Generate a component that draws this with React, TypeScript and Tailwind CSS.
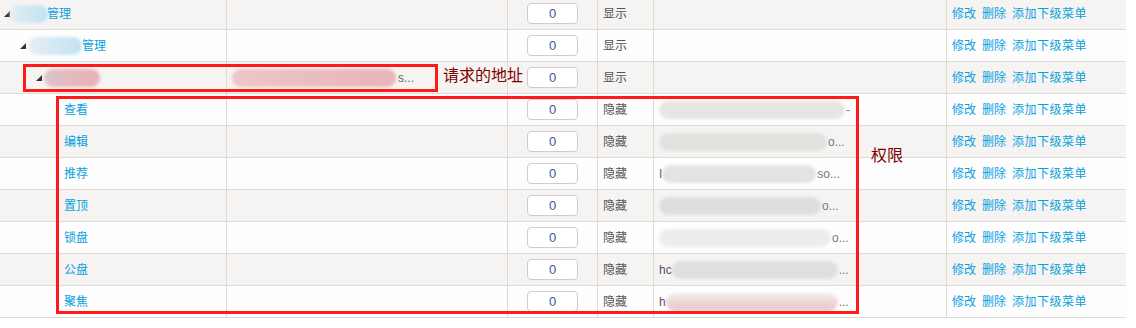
import React from 'react';

const font = { fontFamily: '"Liberation Sans", "Noto Sans CJK SC", sans-serif' };

function Tri() {
  return (
    <svg width="6" height="6" viewBox="0 0 6 6" className="shrink-0">
      <path d="M6 0 L6 6 L0 6 Z" fill="#333" />
    </svg>
  );
}

function Smear({ className }: { className: string }) {
  return <div className={`h-[18px] rounded-full blur-[1.5px] ${className}`} />;
}

function Zero() {
  return (
    <div className="w-[51px] h-[21px] rounded-[4px] border border-[#cfcdca] bg-white flex items-center justify-center text-[13px] text-[#3a5a8a]">
      0
    </div>
  );
}

function Actions() {
  return (
    <div className="flex gap-[6px] text-[12px] text-[#0aa0de] pl-[5px]">
      <span>修改</span>
      <span>删除</span>
      <span className="tracking-[0.5px]">添加下级菜单</span>
    </div>
  );
}

const children = [
  { name: '查看', tail: '-', smear: 'w-[186px] bg-[#e6e5e3]', pre: '' },
  { name: '编辑', tail: 'o...', smear: 'w-[168px] bg-[#e2e1df]', pre: '' },
  { name: '推荐', tail: 'so...', smear: 'w-[154px] bg-[#e4e3e1]', pre: 'I' },
  { name: '置顶', tail: 'o...', smear: 'w-[162px] bg-[#dfdedc]', pre: '' },
  { name: '锁盘', tail: 'o...', smear: 'w-[172px] bg-[#eeedeb]', pre: '' },
  { name: '公盘', tail: '...', smear: 'w-[166px] bg-[#e0dfdd]', pre: 'hc' },
  { name: '聚焦', tail: '...', smear: 'w-[172px] bg-gradient-to-b from-[#efeeec] to-[#e8c4c6]', pre: 'h' },
];

export default function App() {
  return (
    <div className="relative w-[1136px] h-[328px] bg-white overflow-hidden text-[12px]" style={font}>
      <div className="w-[1126px] mt-[-2px]">
        {/* 一级 */}
        <div className="flex h-[32px] border-b border-[#dedbd7] bg-[#f5f4f2]">
          <div className="w-[227px] border-r border-[#dedbd7] flex items-center pl-[4px]">
            <Tri />
            <Smear className="w-[38px] bg-gradient-to-r from-[#e4edf2] to-[#bfe2f3]" />
            <span className="text-[#0aa0de] -ml-[1px]">管理</span>
          </div>
          <div className="w-[281px] border-r border-[#dedbd7]" />
          <div className="w-[90px] border-r border-[#dedbd7] flex items-center justify-center"><Zero /></div>
          <div className="w-[56px] border-r border-[#dedbd7] flex items-center pl-[5px] text-[#555]">显示</div>
          <div className="w-[293px] border-r border-[#dedbd7]" />
          <div className="w-[179px] flex items-center"><Actions /></div>
        </div>
        {/* 二级 */}
        <div className="flex h-[32px] border-b border-[#dedbd7] bg-[#fefefe]">
          <div className="w-[227px] border-r border-[#dedbd7] flex items-center pl-[20px]">
            <Tri />
            <Smear className="w-[54px] ml-[2px] bg-gradient-to-r from-[#e6eff4] to-[#c2e3f3]" />
            <span className="text-[#0aa0de]">管理</span>
          </div>
          <div className="w-[281px] border-r border-[#dedbd7]" />
          <div className="w-[90px] border-r border-[#dedbd7] flex items-center justify-center"><Zero /></div>
          <div className="w-[56px] border-r border-[#dedbd7] flex items-center pl-[5px] text-[#555]">显示</div>
          <div className="w-[293px] border-r border-[#dedbd7]" />
          <div className="w-[179px] flex items-center"><Actions /></div>
        </div>
        {/* 三级 */}
        <div className="flex h-[32px] border-b border-[#dedbd7] bg-[#f5f4f2]">
          <div className="w-[227px] border-r border-[#dedbd7] flex items-center pl-[36px]">
            <Tri />
            <Smear className="w-[56px] ml-[2px] bg-gradient-to-r from-[#dcc3cb] to-[#eab0b4]" />
          </div>
          <div className="w-[281px] border-r border-[#dedbd7] flex items-center pl-[5px] text-[#666]">
            <Smear className="w-[164px] bg-gradient-to-r from-[#ecc6c8] to-[#e8b4b8]" />
            <span className="ml-[2px]">s...</span>
          </div>
          <div className="w-[90px] border-r border-[#dedbd7] flex items-center justify-center"><Zero /></div>
          <div className="w-[56px] border-r border-[#dedbd7] flex items-center pl-[5px] text-[#555]">显示</div>
          <div className="w-[293px] border-r border-[#dedbd7]" />
          <div className="w-[179px] flex items-center"><Actions /></div>
        </div>
        {/* 权限 */}
        {children.map((c, i) => (
          <div
            key={c.name}
            className={`flex h-[32px] border-b border-[#dedbd7] ${i % 2 === 0 ? 'bg-[#fefefe]' : 'bg-[#f5f4f2]'}`}
          >
            <div className="w-[227px] border-r border-[#dedbd7] flex items-center pl-[64px] text-[#0aa0de]">{c.name}</div>
            <div className="w-[281px] border-r border-[#dedbd7]" />
            <div className="w-[90px] border-r border-[#dedbd7] flex items-center justify-center"><Zero /></div>
            <div className="w-[56px] border-r border-[#dedbd7] flex items-center pl-[5px] text-[#555]">隐藏</div>
            <div className="w-[293px] border-r border-[#dedbd7] flex items-center pl-[5px] text-[#666]">
              {c.pre && <span className="text-[#5a4a7a]">{c.pre}</span>}
              <Smear className={c.smear} />
              <span className="ml-[1px] text-[#777]">{c.tail}</span>
            </div>
            <div className="w-[179px] flex items-center"><Actions /></div>
          </div>
        ))}
      </div>

      {/* 标注 */}
      <div className="absolute left-[23px] top-[64px] w-[415px] h-[28px] border-[3px] border-[#ff1a1a]" />
      <div className="absolute left-[443px] top-[65px] text-[16px] text-[#800000] leading-[22px]">请求的地址</div>
      <div className="absolute left-[56px] top-[96px] w-[803px] h-[218px] border-[3px] border-[#ff1a1a]" />
      <div className="absolute left-[871px] top-[145px] text-[16px] text-[#800000] leading-[22px]">权限</div>
    </div>
  );
}
